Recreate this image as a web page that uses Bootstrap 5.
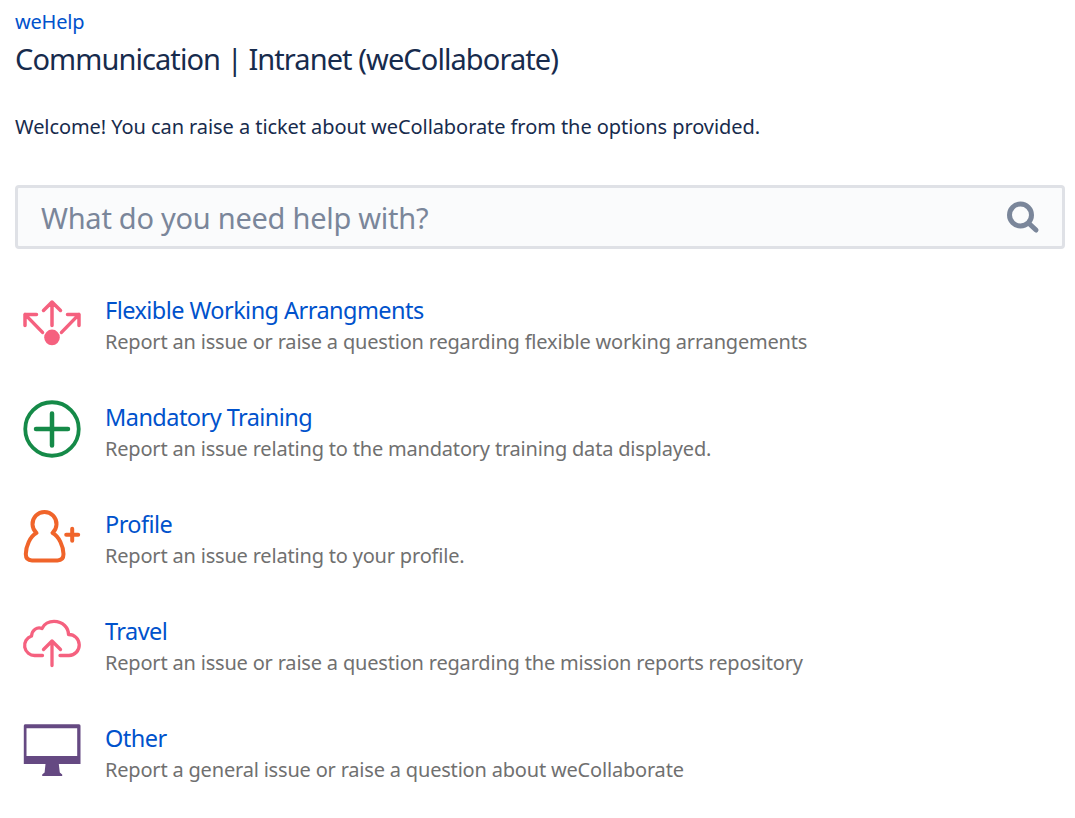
<!DOCTYPE html>
<html lang="en">
<head>
<meta charset="utf-8">
<title>weHelp</title>
<link href="https://cdn.jsdelivr.net/npm/bootstrap@5.3.0/dist/css/bootstrap.min.css" rel="stylesheet">
<style>
body { font-family: "Noto Sans", "Open Sans", sans-serif; color: #172b4d; background: #fff; }
a { color: #0052cc; text-decoration: none; }
.portal-page { padding: 8px 10px 0 15px; }
.crumb-link { font-size: 20px; line-height: 28px; letter-spacing: -0.2px; display: block; height: 28px; }
.portal-title { font-size: 29px; line-height: 34px; font-weight: 400; margin: 6px 0 0; letter-spacing: -0.92px; }
.welcome { font-size: 20px; line-height: 28px; margin: 37px 0 0; letter-spacing: -0.07px; }
.search-box { margin-top: 44px; height: 64px; background: #fafbfc; border: 3px solid #dfe1e6; border-radius: 4px; padding: 0 22px 0 21px; }
.search-input { background: transparent; border: 0; outline: 0; font-size: 29px; letter-spacing: -0.26px; color: #172b4d; height: 100%; min-width: 0; padding: 0 2px; }
.search-input::placeholder { color: #7a869a; opacity: 1; }
.search-icon { width: 34px; height: 34px; flex: none; }
.type-list { margin-top: 33px; }
.type-row { height: 106.9px; gap: 23.5px; padding-left: 6.5px; }
.type-icon { width: 60px; height: 60px; flex: none; margin-top: 10.5px; }
.type-name { font-size: 23.5px; line-height: 32px; letter-spacing: -0.55px; display: block; margin-top: 12px; }
.type-desc { font-size: 20px; line-height: 28px; color: #707070; letter-spacing: -0.19px; margin: 2px 0 0; }
</style>
</head>
<body>
<main class="portal-page">
  <a class="crumb-link" href="#">weHelp</a>
  <h1 class="portal-title">Communication | Intranet (weCollaborate)</h1>
  <p class="welcome">Welcome! You can raise a ticket about weCollaborate from the options provided.</p>
  <form class="search-box d-flex align-items-center">
    <input class="search-input flex-grow-1" type="text" placeholder="What do you need help with?" aria-label="Search">
    <svg class="search-icon" viewBox="0 0 34 34" fill="none" stroke="#7a869a"><circle cx="14.500" cy="15" r="11" stroke-width="5"/><path d="M23 23.500l7 6.500" stroke-width="5" stroke-linecap="round"/></svg>
  </form>
  <div class="type-list">
    <div class="type-row d-flex">
      <svg class="type-icon" viewBox="0 0 60 60" fill="none" stroke="#f5617f" stroke-width="3.500" stroke-linecap="round" stroke-linejoin="round"><circle cx="30" cy="44.400" r="7.800" fill="#f5617f" stroke="none"/><path d="M30 32.400V9M21.500 17.400L30 9l8.500 8.400M20.500 39.400L3 21.400M3 32.400V21.400h11.500M39.500 39.400L57 21.400M45.500 21.400H57v11"/></svg>
      <div><a class="type-name" href="#">Flexible Working Arrangments</a><p class="type-desc">Report an issue or raise a question regarding flexible working arrangements</p></div>
    </div>
    <div class="type-row d-flex">
      <svg class="type-icon" viewBox="0 0 60 60" fill="none" stroke="#158a48" stroke-linecap="round"><circle cx="30" cy="30" r="26.750" stroke-width="3.800"/><path d="M30 14.500v32M14 30h32" stroke-width="4.500"/></svg>
      <div><a class="type-name" href="#">Mandatory Training</a><p class="type-desc">Report an issue relating to the mandatory training data displayed.</p></div>
    </div>
    <div class="type-row d-flex">
      <svg class="type-icon" viewBox="0 0 60 60" fill="none" stroke="#f0642a" stroke-width="4" stroke-linecap="round" stroke-linejoin="round"><path d="M14.500 27A12 12 0 1 1 30.500 27C37 30 41.500 41 41.500 48c0 4.500-2 6.400-6 6.400H10c-4 0-6.200-2-6.200-6.400C3.800 41 8 30 14.500 27z"/><path d="M50.200 22.700v12M44.200 28.700h12"/></svg>
      <div><a class="type-name" href="#">Profile</a><p class="type-desc">Report an issue relating to your profile.</p></div>
    </div>
    <div class="type-row d-flex">
      <svg class="type-icon" viewBox="0 0 60 60" fill="none" stroke="#f5617f" stroke-width="3.300" stroke-linecap="round" stroke-linejoin="round"><path d="M20.500 42.500H13A10 10 0 0 1 9.500 23C10 17 15 13.500 20 15.500 22 11 27 8.300 32 8.300c9 0 14.500 6.700 14.500 13.200A10.500 10.500 0 0 1 47 42.500H38"/><path d="M30 52.500V28M21.500 36.500L30 28l8.500 8.500"/></svg>
      <div><a class="type-name" href="#">Travel</a><p class="type-desc">Report an issue or raise a question regarding the mission reports repository</p></div>
    </div>
    <div class="type-row d-flex">
      <svg class="type-icon" viewBox="0 0 60 60"><path fill="#654982" fill-rule="evenodd" d="M3 4.200h54a1.500 1.500 0 0 1 1.500 1.500v38.200H1.800V5.700A1.500 1.500 0 0 1 3 4.200zM4.500 8.200v27.700h50.700V8.200zM23.500 43.900h13.300l1 8.500 2.400 2v1.500H20.200v-1.500l2.400-2z"/></svg>
      <div><a class="type-name" href="#">Other</a><p class="type-desc">Report a general issue or raise a question about weCollaborate</p></div>
    </div>
  </div>
</main>
<script src="https://cdn.jsdelivr.net/npm/bootstrap@5.3.0/dist/js/bootstrap.bundle.min.js"></script>
</body>
</html>
